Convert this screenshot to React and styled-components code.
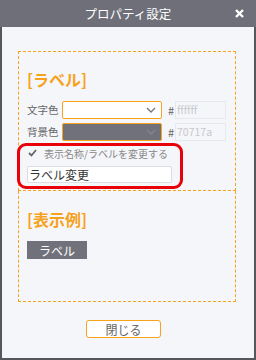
import React from 'react';
import styled, { createGlobalStyle } from 'styled-components';

const GlobalStyle = createGlobalStyle`
  html, body { margin: 0; padding: 0; background: #f5f6fa; }
  body { font-family: "Noto Sans CJK JP", "Noto Sans", sans-serif; }
  * { box-sizing: border-box; }
`;

const ORANGE = '#f7a21c';

const Dialog = styled.div`
  width: 256px;
  height: 360px;
  border: 2px solid #56565c;
  border-top: none;
  background: #f5f6fa;
  display: flex;
  flex-direction: column;
`;

const Header = styled.div`
  height: 27px;
  background: #6e6f79;
  margin: 0 -2px;
  display: flex;
  align-items: center;
  justify-content: center;
  position: relative;
  color: #fff;
  font-size: 12.5px;
`;

const CloseX = styled.span`
  position: absolute;
  right: 12px;
  top: 9px;
  display: flex;
`;

const Body = styled.div`
  padding: 24px 18px 0 16px;
  flex: 1;
  display: flex;
  flex-direction: column;
`;

const Section = styled.div`
  position: relative;
  border: 1px dashed ${ORANGE};
  border-top: ${p => (p.$noTop ? 'none' : `1px dashed ${ORANGE}`)};
  height: ${p => p.$h}px;
  padding: ${p => p.$pt}px 8px 0 8px;
`;

const Heading = styled.div`
  color: ${ORANGE};
  font-size: 16px;
  font-weight: bold;
  line-height: 22px;
  margin-bottom: ${p => p.$mb}px;
`;

const ColorRow = styled.div`
  display: flex;
  align-items: center;
  height: 18px;
  margin-bottom: 4px;
`;

const RowLabel = styled.span`
  width: 35px;
  font-size: 10.5px;
  color: #666;
  line-height: 18px;
`;

const Select = styled.div`
  width: 100px;
  height: 18px;
  border: 1px solid ${ORANGE};
  border-radius: 2px;
  background: ${p => p.$bg};
  display: flex;
  align-items: center;
  justify-content: flex-end;
  padding-right: 5px;
`;

const Hash = styled.span`
  margin-left: 6px;
  width: 7px;
  font-size: 11px;
  color: #666;
`;

const HexInput = styled.div`
  width: 51px;
  height: 18px;
  border: 1px solid #e8e9ee;
  background: #f5f6fa;
  font-size: 10.5px;
  color: #c8c8cc;
  line-height: 16px;
  padding-left: 1px;
`;

const CheckRow = styled.div`
  display: flex;
  align-items: center;
  height: 16px;
  padding-left: 1px;
`;

const CheckText = styled.span`
  margin-left: 7px;
  font-size: 10px;
  color: #888;
`;

const TextInput = styled.div`
  width: 145px;
  height: 17px;
  margin-top: 5px;
  border: 1px solid #dcdde2;
  border-radius: 2px;
  background: #fff;
  font-size: 12px;
  color: #333;
  line-height: 15px;
  padding-left: 1px;
`;

const Highlight = styled.div`
  position: absolute;
  left: -2px;
  top: 91px;
  width: 166px;
  height: 46px;
  border: 3px solid #e8000b;
  border-radius: 9px;
  pointer-events: none;
`;

const Chip = styled.div`
  width: 60px;
  height: 18px;
  background: #70717a;
  color: #fff;
  font-size: 12px;
  display: flex;
  align-items: center;
  justify-content: center;
`;

const Footer = styled.div`
  padding: 18px 0 0 68px;
`;

const Button = styled.div`
  width: 75px;
  height: 18px;
  border: 1px solid ${ORANGE};
  border-radius: 3px;
  background: #fff;
  color: #666;
  font-size: 12px;
  display: flex;
  align-items: center;
  justify-content: center;
`;

const Chevron = ({ color }) => (
  <svg width="10" height="6" viewBox="0 0 10 6">
    <path d="M1 1 L5 5 L9 1" fill="none" stroke={color} strokeWidth="1.3" />
  </svg>
);

const Check = () => (
  <svg width="9" height="8" viewBox="0 0 9 8">
    <rect x="0" y="0" width="9" height="8" fill="#f5f6fa" />
    <path d="M1 4 L3.5 6.5 L8 1" fill="none" stroke="#666" strokeWidth="1.8" />
  </svg>
);

const CloseIcon = () => (
  <svg width="9" height="9" viewBox="0 0 9 9">
    <path d="M1 1 L8 8 M8 1 L1 8" stroke="#fff" strokeWidth="2.4" />
  </svg>
);

export default function App() {
  return (
    <>
      <GlobalStyle />
      <Dialog>
        <Header>
          プロパティ設定
          <CloseX><CloseIcon /></CloseX>
        </Header>
        <Body>
          <Section $h={140} $pt={16}>
            <Heading $mb={11}>[ラベル]</Heading>
            <ColorRow>
              <RowLabel>文字色</RowLabel>
              <Select $bg="#fff"><Chevron color="#777" /></Select>
              <Hash>#</Hash>
              <HexInput>ffffff</HexInput>
            </ColorRow>
            <ColorRow>
              <RowLabel>背景色</RowLabel>
              <Select $bg="#70717a"><Chevron color="#85868e" /></Select>
              <Hash>#</Hash>
              <HexInput>70717a</HexInput>
            </ColorRow>
            <CheckRow>
              <Check />
              <CheckText>表示名称/ラベルを変更する</CheckText>
            </CheckRow>
            <TextInput>ラベル変更</TextInput>
            <Highlight />
          </Section>
          <Section $h={111} $pt={17} $noTop>
            <Heading $mb={11}>[表示例]</Heading>
            <Chip>ラベル</Chip>
          </Section>
          <Footer>
            <Button>閉じる</Button>
          </Footer>
        </Body>
      </Dialog>
    </>
  );
}
